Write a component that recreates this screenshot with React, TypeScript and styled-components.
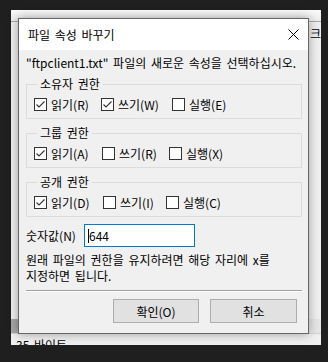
import React from "react";
import styled, { createGlobalStyle } from "styled-components";

type CheckItem = {
  label: string;
  checked: boolean;
  width?: number;
};

type PermGroup = {
  title: string;
  items: CheckItem[];
};

const groups: PermGroup[] = [
  {
    title: "소유자 권한",
    items: [
      { label: "읽기(R)", checked: true, width: 67 },
      { label: "쓰기(W)", checked: true, width: 71 },
      { label: "실행(E)", checked: false },
    ],
  },
  {
    title: "그룹 권한",
    items: [
      { label: "읽기(A)", checked: true, width: 68 },
      { label: "쓰기(R)", checked: false, width: 67 },
      { label: "실행(X)", checked: false },
    ],
  },
  {
    title: "공개 권한",
    items: [
      { label: "읽기(D)", checked: true, width: 69 },
      { label: "쓰기(I)", checked: false, width: 63 },
      { label: "실행(C)", checked: false },
    ],
  },
];

const GlobalStyle = createGlobalStyle`
  html, body {
    margin: 0;
    padding: 0;
    background: #1f1f1f;
  }
  body {
    font-family: "Noto Sans CJK KR", "Liberation Sans", sans-serif;
    font-size: 12px;
    word-spacing: 2px;
    color: #000;
  }
`;

const Checkbox = ({ checked }: { checked: boolean }) => (
  <Box>
    {checked && (
      <svg width="11" height="11" viewBox="0 0 11 11">
        <path d="M1.5 5.5 L4 8 L9.5 2.5" fill="none" stroke="#333" strokeWidth="1.1" />
      </svg>
    )}
  </Box>
);

function App() {
  return (
    <>
      <GlobalStyle />
      <Desktop>
        <BackWindow>
          <BackTop />
          <BackBody>
            <BackLabel>크</BackLabel>
          </BackBody>
          <BackBand>
            <BandCell />
          </BackBand>
          <BackStatus>35 바이트</BackStatus>
        </BackWindow>

        <Dialog>
          <TitleBar>
            <span>파일 속성 바꾸기</span>
            <svg width="11" height="11" viewBox="0 0 11 11">
              <path d="M0.5 0.5 L10.5 10.5 M10.5 0.5 L0.5 10.5" stroke="#000" strokeWidth="1" />
            </svg>
          </TitleBar>
          <DialogBody>
            <Prompt>"ftpclient1.txt" 파일의 새로운 속성을 선택하십시오.</Prompt>
            {groups.map((g) => (
              <Group key={g.title}>
                <legend>{g.title}</legend>
                <CheckRow>
                  {g.items.map((item) => (
                    <Check key={item.label} $width={item.width}>
                      <Checkbox checked={item.checked} />
                      <span>{item.label}</span>
                    </Check>
                  ))}
                </CheckRow>
              </Group>
            ))}
            <NumberRow>
              <NumLabel>숫자값(N)</NumLabel>
              <Input>
                <Caret />
                644
              </Input>
            </NumberRow>
            <Hint>
              원래 파일의 권한을 유지하려면 해당 자리에 x를
              <br />
              지정하면 됩니다.
            </Hint>
            <Divider />
            <Buttons>
              <Button $width={86}>확인(O)</Button>
              <Button $width={87}>취소</Button>
            </Buttons>
          </DialogBody>
        </Dialog>
      </Desktop>
    </>
  );
}

export default App;

const Desktop = styled.div`
  position: relative;
  height: 362px;
  padding: 10px 0 0 11px;
  box-sizing: border-box;
  overflow: hidden;
`;

const BackWindow = styled.div`
  width: 310px;
  height: 335px;
  background: #f0f0f0;
  display: flex;
  flex-direction: column;
  overflow: hidden;
`;

const BackTop = styled.div`
  height: 11px;
  background: linear-gradient(#fafafa, #ececec);
  border-bottom: 1px solid #a8a8a8;
`;

const BackBody = styled.div`
  flex: 1;
  display: flex;
  justify-content: flex-end;
  align-items: flex-start;
  padding-top: 5px;
`;

const BackLabel = styled.span`
  line-height: 14px;
  white-space: nowrap;
`;

const BackBand = styled.div`
  height: 14px;
  background: #e6e6e6;
  border-bottom: 1px solid #d4d4d4;
`;

const BandCell = styled.div`
  width: 60px;
  height: 100%;
  background: #a7a7a7;
`;

const BackStatus = styled.div`
  flex: none;
  height: 11px;
  padding: 4px 0 0 5px;
  box-sizing: border-box;
  line-height: 14px;
  white-space: nowrap;
  overflow: hidden;
`;

const Dialog = styled.div`
  position: absolute;
  left: 18px;
  top: 18px;
  width: 291px;
  height: 316px;
  box-sizing: border-box;
  border: 1px solid #666;
  background: #f0f0f0;
  box-shadow: 0 0 10px rgba(0, 0, 0, 0.35);
  display: flex;
  flex-direction: column;
`;

const TitleBar = styled.div`
  height: 31px;
  background: #fff;
  display: flex;
  align-items: center;
  justify-content: space-between;
  padding: 0 9px 0 9px;
  svg {
    display: block;
  }
`;

const DialogBody = styled.div`
  flex: 1;
  padding: 5px 6px 0 7px;
  display: flex;
  flex-direction: column;
`;

const Prompt = styled.div`
  line-height: 16px;
  white-space: nowrap;
  margin-bottom: 6px;
`;

const Group = styled.fieldset`
  margin: 0 0 7px 0;
  padding: 0 0 7px 7px;
  border: 1px solid #dcdcdc;
  legend {
    margin-left: 3px;
    padding: 0 3px;
    line-height: 14px;
  }
`;

const CheckRow = styled.div`
  display: flex;
  margin-top: 7px;
`;

const Check = styled.label<{ $width?: number }>`
  display: flex;
  align-items: center;
  gap: 4px;
  width: ${(p) => (p.$width ? `${p.$width}px` : "auto")};
  line-height: 13px;
  white-space: nowrap;
`;

const Box = styled.span`
  width: 13px;
  height: 13px;
  box-sizing: border-box;
  border: 1px solid #333;
  background: #fff;
  display: flex;
  align-items: center;
  justify-content: center;
  svg {
    display: block;
  }
`;

const NumberRow = styled.div`
  display: flex;
  align-items: center;
`;

const NumLabel = styled.span`
  width: 58px;
  white-space: nowrap;
  word-spacing: 0;
`;

const Input = styled.div`
  width: 111px;
  height: 23px;
  box-sizing: border-box;
  border: 1px solid #0078d7;
  background: #fff;
  display: flex;
  align-items: center;
  padding-left: 3px;
`;

const Caret = styled.span`
  width: 1px;
  height: 14px;
  background: #000;
`;

const Hint = styled.div`
  margin-top: 5px;
  line-height: 16px;
`;

const Divider = styled.div`
  margin-top: 6px;
  height: 1px;
  background: #a0a0a0;
  border-bottom: 1px solid #fff;
`;

const Buttons = styled.div`
  display: flex;
  justify-content: flex-end;
  gap: 11px;
  padding-right: 5px;
  margin-top: 7px;
`;

const Button = styled.button<{ $width: number }>`
  width: ${(p) => p.$width}px;
  height: 24px;
  background: #e1e1e1;
  border: 1px solid #adadad;
  font-family: inherit;
  font-size: 12px;
  word-spacing: 2px;
  color: #000;
  padding: 0;
`;
